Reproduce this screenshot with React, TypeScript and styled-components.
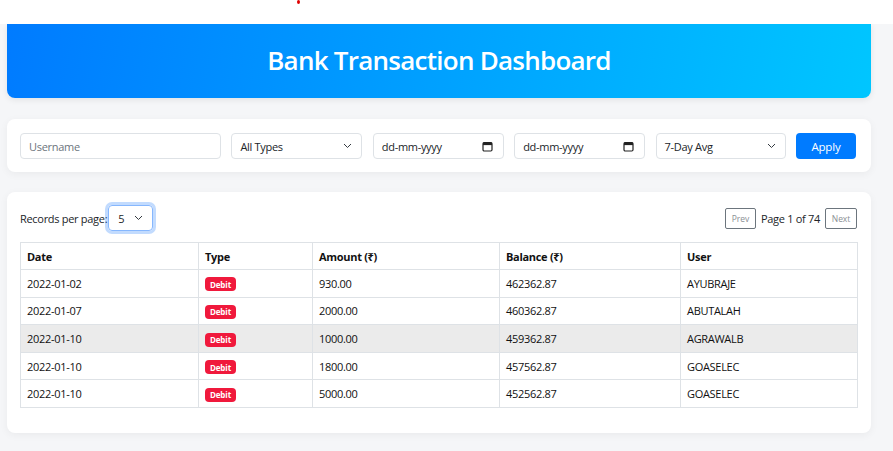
import React from "react";
import styled, { createGlobalStyle } from "styled-components";

const Global = createGlobalStyle`
  html, body { margin: 0; padding: 0; }
  body {
    background: #f5f6f8;
    font-family: "Open Sans", "Noto Sans", "DejaVu Sans", sans-serif;
    color: #212529;
    letter-spacing: -0.3px;
  }
`;

const Page = styled.div`
  width: 893px;
  min-height: 451px;
`;

const TopBand = styled.div`
  height: 24px;
  background: #ffffff;
  position: relative;
`;

const Dot = styled.span`
  position: absolute;
  left: 297px;
  top: 0px;
  width: 3px;
  height: 4px;
  border-radius: 50%;
  background: #e00000;
`;

const Container = styled.div`
  margin: 0 22px 0 7px;
  display: flex;
  flex-direction: column;
  padding-bottom: 18px;
`;

const Header = styled.header`
  height: 74px;
  border-radius: 0 0 8px 8px;
  background: linear-gradient(100deg, #007bff 0%, #00c6ff 100%);
  box-shadow: 0 2px 6px rgba(0, 0, 0, 0.08);
  display: flex;
  align-items: center;
  justify-content: center;
`;

const Title = styled.h1`
  margin: 0;
  color: #fff;
  font-size: 26px;
  font-weight: 600;
  letter-spacing: -0.75px;
  margin-top: -3px;
`;

const Card = styled.section<{ $pb?: number; $mt: number }>`
  margin-top: ${(p) => p.$mt}px;
  background: #fff;
  border-radius: 8px;
  box-shadow: 0 2px 8px rgba(0, 0, 0, 0.05);
  padding: 14px 14px ${(p) => p.$pb ?? 13}px 13px;
`;

const FilterRow = styled.div`
  display: flex;
  align-items: center;
  gap: 10.4px;
`;

const field = `
  box-sizing: border-box;
  height: 26px;
  border: 1px solid #dee2e6;
  border-radius: 4px;
  background: #fff;
  font-family: inherit;
  font-size: 11px;
  letter-spacing: -0.3px;
  color: #212529;
  display: flex;
  align-items: center;
`;

const TextInput = styled.input`
  ${field}
  width: 201px;
  padding: 0 8px;
  outline: none;
  &::placeholder { color: #6c757d; }
`;

const SelectBox = styled.div<{ $w?: number }>`
  ${field}
  width: ${(p) => p.$w ?? 131}px;
  padding: 0 9px 0 8px;
  justify-content: space-between;
`;

const DateBox = styled.div`
  ${field}
  width: 131px;
  padding: 0 10px 0 8px;
  justify-content: space-between;
`;

const ApplyButton = styled.button`
  box-sizing: border-box;
  width: 60px;
  height: 26px;
  border: none;
  border-radius: 4px;
  background: #007bff;
  color: #fff;
  font-family: inherit;
  font-size: 11.5px;
  letter-spacing: -0.2px;
`;

const Chevron = () => (
  <svg width="9" height="6" viewBox="0 0 9 6" fill="none">
    <path d="M1 1l3.5 3.5L8 1" stroke="#343a40" strokeWidth="1" />
  </svg>
);

const CalendarIcon = () => (
  <svg width="11" height="11" viewBox="0 0 11 11" fill="none">
    <rect x="1" y="1.5" width="9" height="8.5" rx="1.2" stroke="#222" strokeWidth="1.2" />
    <rect x="1" y="1.5" width="9" height="2.6" fill="#222" />
  </svg>
);

const Controls = styled.div`
  display: flex;
  align-items: center;
  justify-content: space-between;
  height: 26px;
  margin-bottom: 11px;
  margin-top: -1px;
`;

const PerPage = styled.label`
  display: flex;
  align-items: center;
  font-size: 11px;
  color: #212529;
`;

const SmallSelect = styled.div`
  box-sizing: border-box;
  margin-left: 1px;
  width: 45px;
  height: 26px;
  border: 1px solid #86b7fe;
  border-radius: 4px;
  box-shadow: 0 0 0 3px rgba(13, 110, 253, 0.25);
  display: flex;
  align-items: center;
  justify-content: space-between;
  padding: 0 9px 0 9px;
  font-size: 11px;
`;

const Pager = styled.div`
  display: flex;
  align-items: center;
  gap: 5px;
  font-size: 11px;
`;

const PageButton = styled.button<{ $w: number }>`
  box-sizing: border-box;
  width: ${(p) => p.$w}px;
  height: 21px;
  border: 1px solid #6c757d;
  border-radius: 2px;
  background: #fff;
  color: #8a8f94;
  font-family: inherit;
  font-size: 8.5px;
  letter-spacing: -0.1px;
  padding: 0;
`;

const Table = styled.table`
  width: 837px;
  border-collapse: collapse;
  table-layout: fixed;
  font-size: 11px;
`;

const Th = styled.th<{ $w: number }>`
  box-sizing: border-box;
  width: ${(p) => p.$w}px;
  text-align: left;
  font-weight: 700;
  height: 27px;
  padding: 0 6px;
  border: 1px solid #dee2e6;
  color: #111;
`;

const Tr = styled.tr<{ $hl?: boolean }>`
  background: ${(p) => (p.$hl ? "#ebebeb" : "#fff")};
`;

const Td = styled.td`
  height: 26.6px;
  padding: 0 6px;
  border: 1px solid #dee2e6;
  color: #111;
`;

const Badge = styled.span`
  display: inline-flex;
  align-items: center;
  justify-content: center;
  width: 31px;
  height: 14px;
  border-radius: 4px;
  background: #f0193c;
  color: #fff;
  font-size: 8px;
  font-weight: 700;
  letter-spacing: -0.1px;
  vertical-align: middle;
`;

const rows = [
  ["2022-01-02", "930.00", "462362.87", "AYUBRAJE"],
  ["2022-01-07", "2000.00", "460362.87", "ABUTALAH"],
  ["2022-01-10", "1000.00", "459362.87", "AGRAWALB"],
  ["2022-01-10", "1800.00", "457562.87", "GOASELEC"],
  ["2022-01-10", "5000.00", "452562.87", "GOASELEC"],
];

export default function App() {
  return (
    <Page>
      <Global />
      <TopBand>
        <Dot />
      </TopBand>
      <Container>
        <Header>
          <Title>Bank Transaction Dashboard</Title>
        </Header>
        <Card $mt={21}>
          <FilterRow>
            <TextInput placeholder="Username" />
            <SelectBox>
              <span>All Types</span>
              <Chevron />
            </SelectBox>
            <DateBox>
              <span>dd-mm-yyyy</span>
              <CalendarIcon />
            </DateBox>
            <DateBox>
              <span>dd-mm-yyyy</span>
              <CalendarIcon />
            </DateBox>
            <SelectBox $w={130}>
              <span>7-Day Avg</span>
              <Chevron />
            </SelectBox>
            <ApplyButton>Apply</ApplyButton>
          </FilterRow>
        </Card>
        <Card $mt={20} $pb={25}>
          <Controls>
            <PerPage>
              Records per page:
              <SmallSelect>
                <span>5</span>
                <Chevron />
              </SmallSelect>
            </PerPage>
            <Pager>
              <PageButton $w={31}>Prev</PageButton>
              <span>Page 1 of 74</span>
              <PageButton $w={32}>Next</PageButton>
            </Pager>
          </Controls>
          <Table>
            <thead>
              <tr>
                <Th $w={178}>Date</Th>
                <Th $w={114}>Type</Th>
                <Th $w={187}>Amount (₹)</Th>
                <Th $w={181}>Balance (₹)</Th>
                <Th $w={177}>User</Th>
              </tr>
            </thead>
            <tbody>
              {rows.map((r, i) => (
                <Tr key={i} $hl={i === 2}>
                  <Td>{r[0]}</Td>
                  <Td>
                    <Badge>Debit</Badge>
                  </Td>
                  <Td>{r[1]}</Td>
                  <Td>{r[2]}</Td>
                  <Td>{r[3]}</Td>
                </Tr>
              ))}
            </tbody>
          </Table>
        </Card>
      </Container>
    </Page>
  );
}
